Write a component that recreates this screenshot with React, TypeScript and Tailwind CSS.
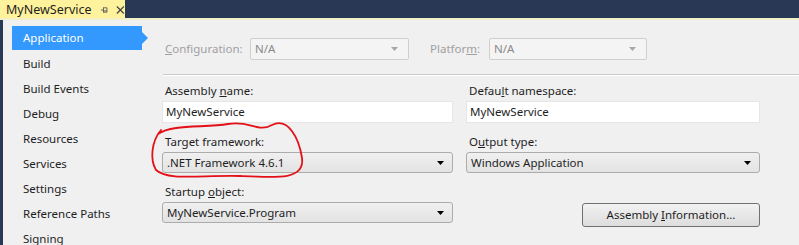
import React from 'react';

const sections = [
  'Application',
  'Build',
  'Build Events',
  'Debug',
  'Resources',
  'Services',
  'Settings',
  'Reference Paths',
  'Signing',
];

const Arrow = ({ color = '#000' }: { color?: string }) => (
  <svg width="7" height="4" viewBox="0 0 7 4">
    <path d="M0 0 L7 0 L3.5 4 Z" fill={color} />
  </svg>
);

const Combo = ({ value, disabled, className }: { value: string; disabled?: boolean; className: string }) =>
  disabled ? (
    <div className={`flex items-center justify-between h-[22px] px-[4px] border border-[#cfcfcf] rounded-[2px] bg-[#f4f4f4] text-[#8a8a8a] ${className}`}>
      <span>{value}</span>
      <span className="pr-[6px]">
        <Arrow color="#a8a8a8" />
      </span>
    </div>
  ) : (
    <div className={`flex items-center justify-between h-[21px] px-[4px] border border-[#acacac] rounded-[3px] bg-gradient-to-b from-[#f0f0f0] to-[#e3e3e3] text-[#1e1e1e] ${className}`}>
      <span>{value}</span>
      <span className="pr-[4px]">
        <Arrow />
      </span>
    </div>
  );

const TextBox = ({ value, className }: { value: string; className: string }) => (
  <div className={`flex items-center h-[22px] px-[3px] bg-white border border-[#e6e6e6] text-[#1e1e1e] ${className}`}>{value}</div>
);

const Label = ({ children }: { children: React.ReactNode }) => (
  <div className="h-[20px] leading-[20px] pl-[3px] text-[#1e1e1e]">{children}</div>
);

export default function App() {
  return (
    <div
      className="relative w-[799px] h-[245px] overflow-hidden bg-[#293955] flex flex-col text-[11.5px]"
      style={{ fontFamily: '"Segoe UI", "Noto Sans", sans-serif' }}
    >
      {/* document tab */}
      <div className="flex h-[18px] shrink-0">
        <div className="flex items-center w-[125px] h-[20px] bg-[#fff29d] pl-[6px] text-[#1e1e1e] text-[12.5px]">
          <span>MyNewService</span>
          <svg className="ml-[8px]" width="10" height="10" viewBox="0 0 10 10">
            <path d="M1 5 H4 M4 2 V8 M4 2.5 H8 V7.5 H4 M4 6 H8" stroke="#555" strokeWidth="1" fill="none" />
          </svg>
          <svg className="ml-[8px]" width="10" height="10" viewBox="0 0 10 10">
            <path d="M1 1 L9 9 M9 1 L1 9" stroke="#444" strokeWidth="1.4" />
          </svg>
        </div>
      </div>
      <div className="h-[2px] bg-[#f2f0c8] shrink-0" />

      <div className="flex flex-1 ml-[3px] bg-[#f0f0f0]">
        {/* sidebar */}
        <div className="w-[150px] pt-[6px] flex flex-col">
          {sections.map((s, i) =>
            i === 0 ? (
              <div key={s} className="relative flex items-center h-[24px] mb-[1px] ml-[9px] w-[130px] bg-[#3399ff] text-white pl-[11px]">
                {s}
                <div className="absolute -right-[6px] top-[6px] w-0 h-0 border-y-[6px] border-y-transparent border-l-[6px] border-l-[#3399ff]" />
              </div>
            ) : (
              <div key={s} className="flex items-center h-[25px] pl-[20px] text-[#1e1e1e]">
                {s}
              </div>
            )
          )}
        </div>

        {/* page */}
        <div className="flex-1 flex flex-col">
          <div className="flex items-center h-[22px] mt-[18px]">
            <span className="w-[97px] pl-[12px] text-[#a0a0a0]">
              <u>C</u>onfiguration:
            </span>
            <Combo value="N/A" disabled className="w-[159px]" />
            <span className="w-[80px] pl-[21px] text-[#a0a0a0]">
              Platfor<u>m</u>:
            </span>
            <Combo value="N/A" disabled className="w-[158px]" />
          </div>

          <div className="h-[15px] border-b border-[#c9c9c9] ml-[10px]" />
          <div className="h-px bg-white ml-[10px]" />

          <div className="flex gap-[13px] pl-[9px] pt-[5px]">
            <div className="flex flex-col w-[291px]">
              <Label>
                Assembly <u>n</u>ame:
              </Label>
              <TextBox value="MyNewService" className="w-[291px]" />
              <div className="h-[9px]" />
              <Label>Target framework:</Label>
              <Combo value=".NET Framework 4.6.1" className="w-[291px]" />
              <div className="h-[9px]" />
              <Label>
                Startup <u>o</u>bject:
              </Label>
              <Combo value="MyNewService.Program" className="w-[291px]" />
            </div>
            <div className="flex flex-col w-[294px]">
              <Label>
                Defau<u>l</u>t namespace:
              </Label>
              <TextBox value="MyNewService" className="w-[294px]" />
              <div className="h-[9px]" />
              <Label>
                O<u>u</u>tput type:
              </Label>
              <Combo value="Windows Application" className="w-[294px]" />
              <div className="flex justify-end pt-[30px]">
                <button className="w-[178px] h-[24px] border border-[#707070] rounded-[3px] bg-gradient-to-b from-[#f2f2f2] to-[#dddddd] text-[#1e1e1e] text-[11.5px]">
                  Assembly <u>I</u>nformation...
                </button>
              </div>
            </div>
          </div>
        </div>
      </div>

      {/* hand-drawn annotation */}
      <svg className="absolute left-0 top-0 pointer-events-none" width="799" height="245" viewBox="0 0 799 245">
        <path
          d="M158 134 C172 124 205 128 228 124 C250 120 258 133 272 125 C288 117 299 138 302 158 C305 180 278 178 240 176 C200 175 168 181 156 170 C150 160 151 142 161 130"
          stroke="#e31018"
          strokeWidth="1.8"
          fill="none"
          strokeLinecap="round"
        />
      </svg>
    </div>
  );
}
